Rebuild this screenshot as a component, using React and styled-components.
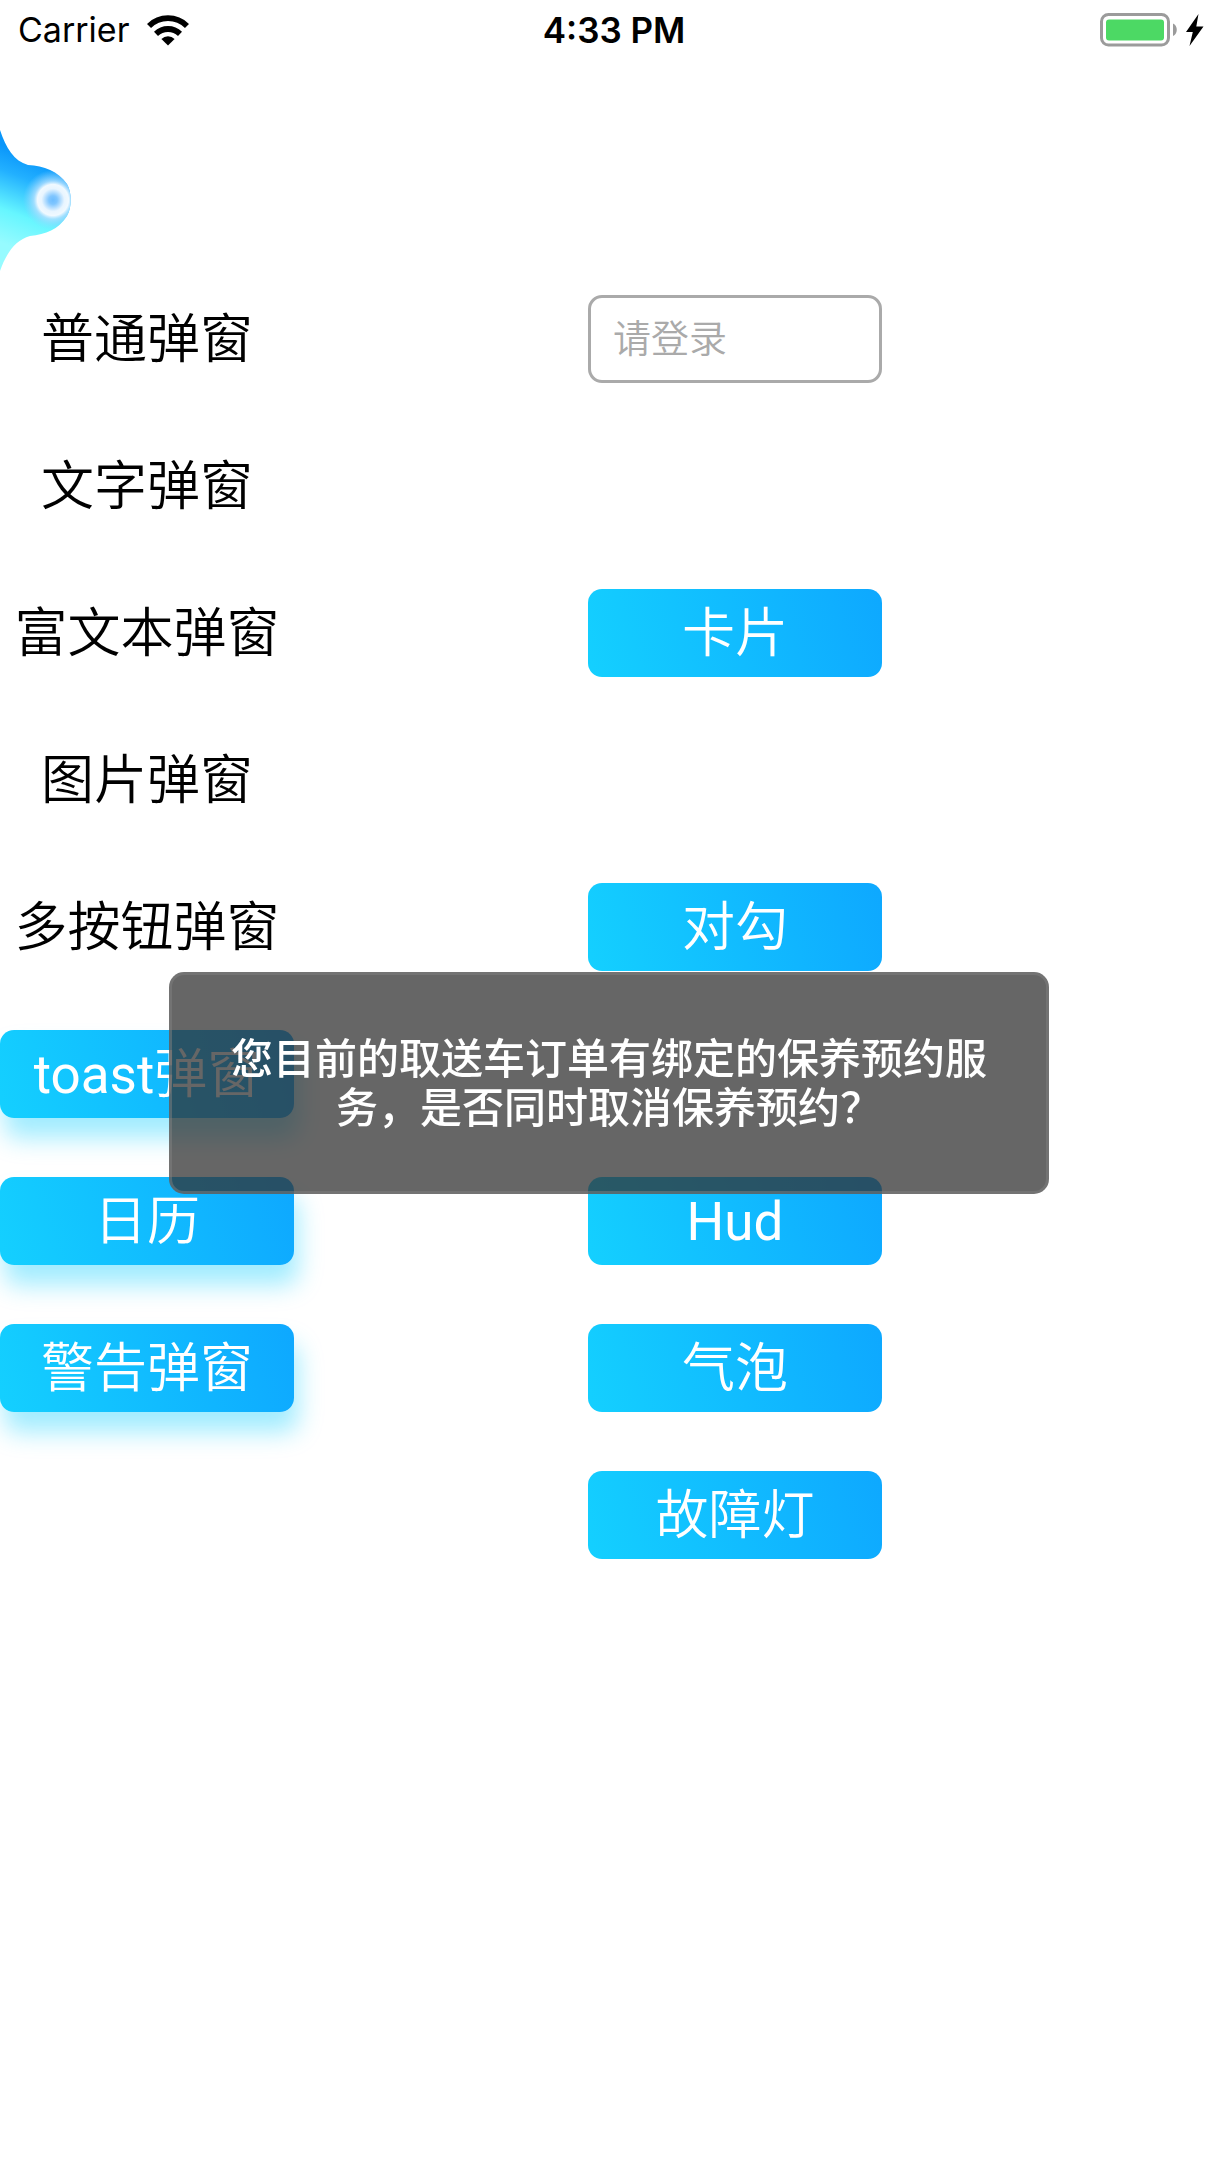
import React from "react";
import styled, { createGlobalStyle, css } from "styled-components";

const GlobalStyle = createGlobalStyle`
  *, *::before, *::after { box-sizing: border-box; }
  body {
    margin: 0;
    background: #fff;
    color: #000;
    font-family: Roboto, "Noto Sans CJK SC", sans-serif;
  }
  button, input { font-family: inherit; }
`;

const Screen = styled.main`
  position: relative;
  display: flex;
  flex-direction: column;
  min-height: 100vh;
`;

const StatusBar = styled.header`
  display: grid;
  grid-template-columns: 1fr auto 1fr;
  align-items: center;
  height: 60px;
  padding: 0 8px 0 18px;
  font-family: Inter, sans-serif;
  line-height: 60px;
`;

const Network = styled.div`
  display: flex;
  align-items: center;
  gap: 18px;
  font-size: 34px;
`;

const Clock = styled.time`
  font-size: 35px;
  font-weight: 600;
`;

const Power = styled.div`
  display: flex;
  align-items: center;
  justify-content: flex-end;
`;

const StatusIcon = styled.svg`
  display: block;
  flex: none;
`;

const AssistantButton = styled.button`
  display: block;
  width: 72px;
  margin: 70px 0 20px;
  padding: 0;
  border: 0;
  background: none;

  svg { display: block; }
`;

const Board = styled.div`
  display: grid;
  grid-template-columns: 7fr 7fr 7fr 8fr;
  grid-auto-rows: 88px;
  row-gap: 59px;
`;

const cell = css`
  grid-column: ${(p) => p.$col};
  grid-row: ${(p) => p.$row};
  min-width: 0;
  border-radius: 14px;
`;

const Action = styled.button`
  ${cell}
  padding: 2px 0 0;
  border: 0;
  background: none;
  color: #000;
  font-size: 53px;
  font-weight: 350;
  line-height: 86px;
  white-space: nowrap;
`;

const FilledAction = styled(Action)`
  background: linear-gradient(73deg, #14d0ff, #0ea8ff);
  color: #fff;
  box-shadow: ${(p) => (p.$raised ? "4px 20px 24px rgba(20, 208, 255, 0.4)" : "none")};
`;

const Latin = styled.span`
  font-weight: 400;
`;

const LoginInput = styled.input`
  ${cell}
  width: 100%;
  padding: 0 22px;
  border: 3px solid #aaa;
  background: #fff;
  color: #000;
  font-size: 38px;
  font-weight: 350;

  &::placeholder {
    color: #aaa;
    opacity: 1;
  }
`;

const Toast = styled.div`
  position: fixed;
  top: 50%;
  left: 50%;
  width: 880px;
  max-width: 100%;
  padding: 60px 54px 58px;
  transform: translate(-50%, -50%);
  border: 3px solid rgba(128, 128, 128, 0.5);
  border-radius: 15px;
  background: rgba(49, 49, 49, 0.74);
  color: #fff;
  font-size: 42px;
  font-weight: 500;
  line-height: 49px;
  text-align: center;
`;

const plainActions = ["普通弹窗", "文字弹窗", "富文本弹窗", "图片弹窗", "多按钮弹窗"];

const filledActions = [
  { latin: "toast", label: "弹窗", col: 1, row: 6, raised: true },
  { label: "日历", col: 1, row: 7, raised: true },
  { label: "警告弹窗", col: 1, row: 8, raised: true },
  { label: "卡片", col: 3, row: 3 },
  { label: "对勾", col: 3, row: 5 },
  { latin: "Hud", col: 3, row: 7 },
  { label: "气泡", col: 3, row: 8 },
  { label: "故障灯", col: 3, row: 9 },
];

const WifiIcon = () => (
  <StatusIcon width="42" height="31" viewBox="0 0 42 31" aria-hidden="true">
    <g fill="none" stroke="#000" strokeWidth="5.8">
      <path d="M2 11 A27 27 0 0 1 40 11" />
      <path d="M9 18.8 A17.4 17.4 0 0 1 33 18.8" />
    </g>
    <path d="M14.4 24 A9.5 9.5 0 0 1 27.6 24 L21 30.4 Z" />
  </StatusIcon>
);

const BatteryIcon = () => (
  <StatusIcon width="110" height="34" viewBox="0 0 110 34" aria-hidden="true">
    <rect x="1.5" y="1.5" width="67" height="30.5" rx="7" fill="none" stroke="#9b9b9b" strokeWidth="3" />
    <rect x="6" y="6.5" width="58" height="21" rx="3" fill="#4cd964" />
    <path d="M73 10.5 C78 12.5 78 21 73 23 Z" fill="#9b9b9b" />
    <path d="M98.5 1 L86 19 H92.8 L89.5 33 L103.5 13.5 H96.3 Z" />
  </StatusIcon>
);

const blobOutline =
  "M0 0 C6 18 14 31 28 35 C44 36 58 41 67 54 C72 63 72 77 67 86 C58 100 46 104 30 106 C15 110 6 124 0 141 Z";

const AssistantBlob = () => (
  <svg width="72" height="145" viewBox="0 0 72 145" aria-hidden="true">
    <defs>
      <linearGradient id="body" x1="42" y1="30" x2="10" y2="116" gradientUnits="userSpaceOnUse">
        <stop offset="0" stopColor="#0a96fa" />
        <stop offset="0.25" stopColor="#22b0ff" />
        <stop offset="0.65" stopColor="#66f6ff" />
        <stop offset="1" stopColor="#96fbff" />
      </linearGradient>
      <radialGradient id="glow" cx="53" cy="70" r="30" gradientUnits="userSpaceOnUse">
        <stop offset="0" stopColor="#6dbdff" />
        <stop offset="0.14" stopColor="#80c6ff" />
        <stop offset="0.38" stopColor="#e8f5ff" />
        <stop offset="0.52" stopColor="#f0f9ff" />
        <stop offset="0.64" stopColor="#b4e0ff" stopOpacity="0.8" />
        <stop offset="1" stopColor="#8cd2ff" stopOpacity="0" />
      </radialGradient>
    </defs>
    <path d={blobOutline} fill="url(#body)" />
    <path d={blobOutline} fill="url(#glow)" />
  </svg>
);

export default function App() {
  return (
    <Screen>
      <GlobalStyle />
      <StatusBar>
        <Network>
          <span>Carrier</span>
          <WifiIcon />
        </Network>
        <Clock>4:33 PM</Clock>
        <Power>
          <BatteryIcon />
        </Power>
      </StatusBar>
      <AssistantButton type="button" aria-label="助手">
        <AssistantBlob />
      </AssistantButton>
      <Board>
        {plainActions.map((label, i) => (
          <Action key={label} type="button" $col={1} $row={i + 1}>
            {label}
          </Action>
        ))}
        <LoginInput type="text" placeholder="请登录" aria-label="请登录" $col={3} $row={1} />
        {filledActions.map(({ latin, label, col, row, raised }) => (
          <FilledAction key={`${col}-${row}`} type="button" $col={col} $row={row} $raised={raised}>
            {latin && <Latin>{latin}</Latin>}
            {label}
          </FilledAction>
        ))}
      </Board>
      <Toast role="status">您目前的取送车订单有绑定的保养预约服务，是否同时取消保养预约？</Toast>
    </Screen>
  );
}
